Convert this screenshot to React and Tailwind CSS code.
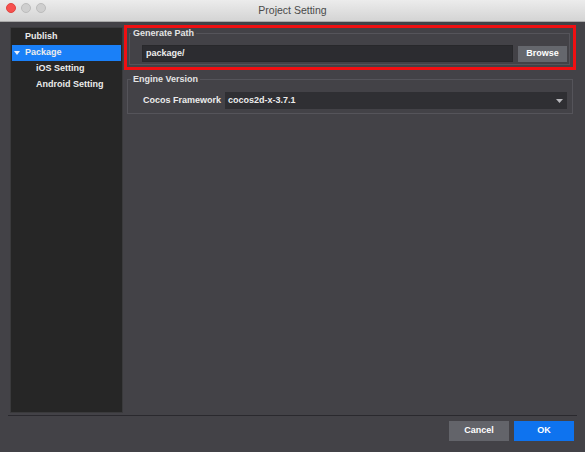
import React from 'react';

const font = "font-['Liberation_Sans',Arial,sans-serif]";

const TrafficLight = ({ color }) => (
  <span className={`w-[10px] h-[10px] rounded-full border ${color}`} />
);

const SideItem = ({ label, selected, indent, arrow }) => (
  <div
    className={`h-[16px] flex items-center text-[9px] font-bold text-[#ececec] ${
      selected ? 'bg-[#1a80f8]' : ''
    } ${indent ? 'pl-[24px]' : 'pl-[13px]'} relative`}
  >
    {arrow && (
      <svg className="absolute left-[2px] top-[6px]" width="6" height="4" viewBox="0 0 6 4">
        <path d="M0 0 L6 0 L3 4 Z" fill="#e8eefa" />
      </svg>
    )}
    {label}
  </div>
);

export default function App() {
  return (
    <div className={`w-[585px] h-[452px] bg-[#434247] flex flex-col ${font}`}>
      {/* Title bar */}
      <div className="h-[22px] shrink-0 relative flex items-center justify-center bg-gradient-to-b from-[#ececec] to-[#d4d4d4] border-b border-[#a9a9a9]">
        <div className="absolute left-[6px] top-[3px] flex gap-[5px]">
          <TrafficLight color="bg-[#f7514f] border-[#e0443f]" />
          <TrafficLight color="bg-[#cfcfcf] border-[#bcbcbc]" />
          <TrafficLight color="bg-[#cfcfcf] border-[#bcbcbc]" />
        </div>
        <span className="text-[10.5px] text-[#4a4a4a] leading-none">Project Setting</span>
      </div>

      {/* Main area */}
      <div className="flex items-start">
        {/* Sidebar */}
        <div className="ml-[10px] mt-[5px] w-[113px] h-[386px] bg-[#262626] border border-[#3a3a3c] pt-[1px] px-[1px]">
          <SideItem label="Publish" />
          <SideItem label="Package" selected arrow />
          <SideItem label="iOS Setting" indent />
          <SideItem label="Android Setting" indent />
        </div>

        {/* Right column */}
        <div className="ml-[1px] mr-[9px] mt-[3px] flex-1 flex flex-col">
          <div className="border-[3px] border-[#f00f12]">
            <fieldset className="ml-[2px] mr-[3px] mb-[2px] border border-[#55545a]">
              <legend className="ml-[1px] px-[2px] text-[9px] leading-[11px] font-bold text-[#e4e4e4]">
                Generate Path
              </legend>
              <div className="flex items-center gap-[5px] mt-[6px] pl-[12px] pr-[2px] pb-[2px]">
                <div className="flex-1 h-[17px] bg-[#2c2c30] border border-[#28282b] flex items-center pl-[3px] text-[9px] font-bold text-[#ececec]">
                  package/
                </div>
                <div className="w-[49px] h-[16px] bg-[#65676d] flex items-center justify-center text-[9px] font-bold text-white">
                  Browse
                </div>
              </div>
            </fieldset>
          </div>

          <fieldset className="mx-[3px] mt-[4px] border border-[#55545a]">
            <legend className="ml-[3px] px-[2px] text-[9px] leading-[11px] font-bold text-[#e4e4e4]">
              Engine Version
            </legend>
            <div className="flex items-center mt-[7px] pl-[15px] pr-[5px] pb-[4px]">
              <span className="w-[82px] shrink-0 text-[9px] font-bold text-[#ececec]">Cocos Framework</span>
              <div className="flex-1 h-[17px] bg-[#2f2f33] flex items-center justify-between pl-[3px] pr-[4px] text-[9px] font-bold text-[#ececec]">
                <span>cocos2d-x-3.7.1</span>
                <svg width="7" height="4" viewBox="0 0 7 4">
                  <path d="M0 0 L7 0 L3.5 4 Z" fill="#b8b8bc" />
                </svg>
              </div>
            </div>
          </fieldset>
        </div>
      </div>

      {/* Separator */}
      <div className="mt-[2px] mx-[8px] h-[1px] bg-[#2a292e]" />

      {/* Footer buttons */}
      <div className="mt-[5px] mr-[11px] flex justify-end gap-[5px]">
        <div className="w-[60px] h-[20px] bg-[#63646a] flex items-center justify-center text-[9px] font-bold text-white">
          Cancel
        </div>
        <div className="w-[60px] h-[20px] bg-[#0e73ef] flex items-center justify-center text-[9px] font-bold text-white">
          OK
        </div>
      </div>
    </div>
  );
}
